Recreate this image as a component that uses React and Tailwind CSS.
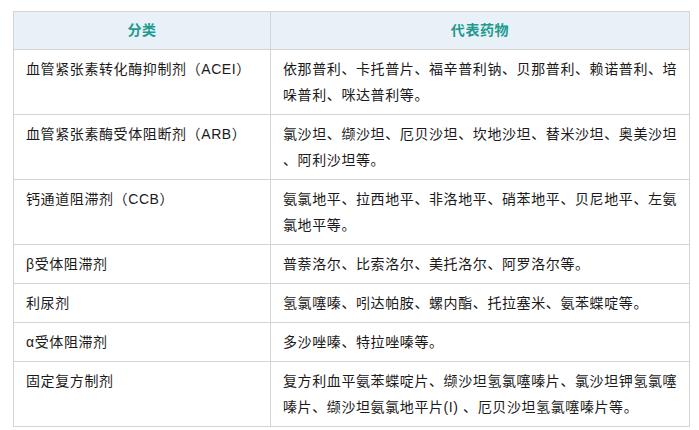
import React from 'react';

// Antihypertensive drug classes with representative drugs
const rows = [
  { kind: '血管紧张素转化酶抑制剂（ACEI）', drugs: '依那普利、卡托普片、福辛普利钠、贝那普利、赖诺普利、培哚普利、咪达普利等。' },
  { kind: '血管紧张素酶受体阻断剂（ARB）', drugs: '氯沙坦、缬沙坦、厄贝沙坦、坎地沙坦、替米沙坦、奥美沙坦、阿利沙坦等。' },
  { kind: '钙通道阻滞剂（CCB）', drugs: '氨氯地平、拉西地平、非洛地平、硝苯地平、贝尼地平、左氨氯地平等。' },
  { kind: 'β受体阻滞剂', drugs: '普萘洛尔、比索洛尔、美托洛尔、阿罗洛尔等。' },
  { kind: '利尿剂', drugs: '氢氯噻嗪、吲达帕胺、螺内酯、托拉塞米、氨苯蝶啶等。' },
  { kind: 'α受体阻滞剂', drugs: '多沙唑嗪、特拉唑嗪等。' },
  { kind: '固定复方制剂', drugs: '复方利血平氨苯蝶啶片、缬沙坦氢氯噻嗪片、氯沙坦钾氢氯噻嗪片、缬沙坦氨氯地平片(I) 、厄贝沙坦氢氯噻嗪片等。' },
];

export default function App() {
  return (
    <div className="bg-white w-[699px] h-[430px] pt-[11px] pl-[13px] font-['Liberation_Sans','Noto_Sans_CJK_SC',sans-serif] text-[14px] tracking-[0.6px] text-[#1a1a1a]">
      <table className="w-[677px] border-collapse table-fixed">
        <colgroup>
          <col className="w-[257px]" />
          <col />
        </colgroup>
        <thead>
          <tr className="bg-[#e8f1f8]">
            <th className="border border-[#d4d4d4] h-[38px] font-semibold text-[#1f9a8f] text-center">分类</th>
            <th className="border border-[#d4d4d4] h-[38px] font-semibold text-[#1f9a8f] text-center">代表药物</th>
          </tr>
        </thead>
        <tbody>
          {rows.map((r) => (
            <tr key={r.kind}>
              <td className="border border-[#d4d4d4] align-top px-3 py-[6px] leading-[26px]">{r.kind}</td>
              <td className="border border-[#d4d4d4] align-top pl-3 pr-1 py-[6px] leading-[26px] [line-break:anywhere]">{r.drugs}</td>
            </tr>
          ))}
        </tbody>
      </table>
    </div>
  );
}
